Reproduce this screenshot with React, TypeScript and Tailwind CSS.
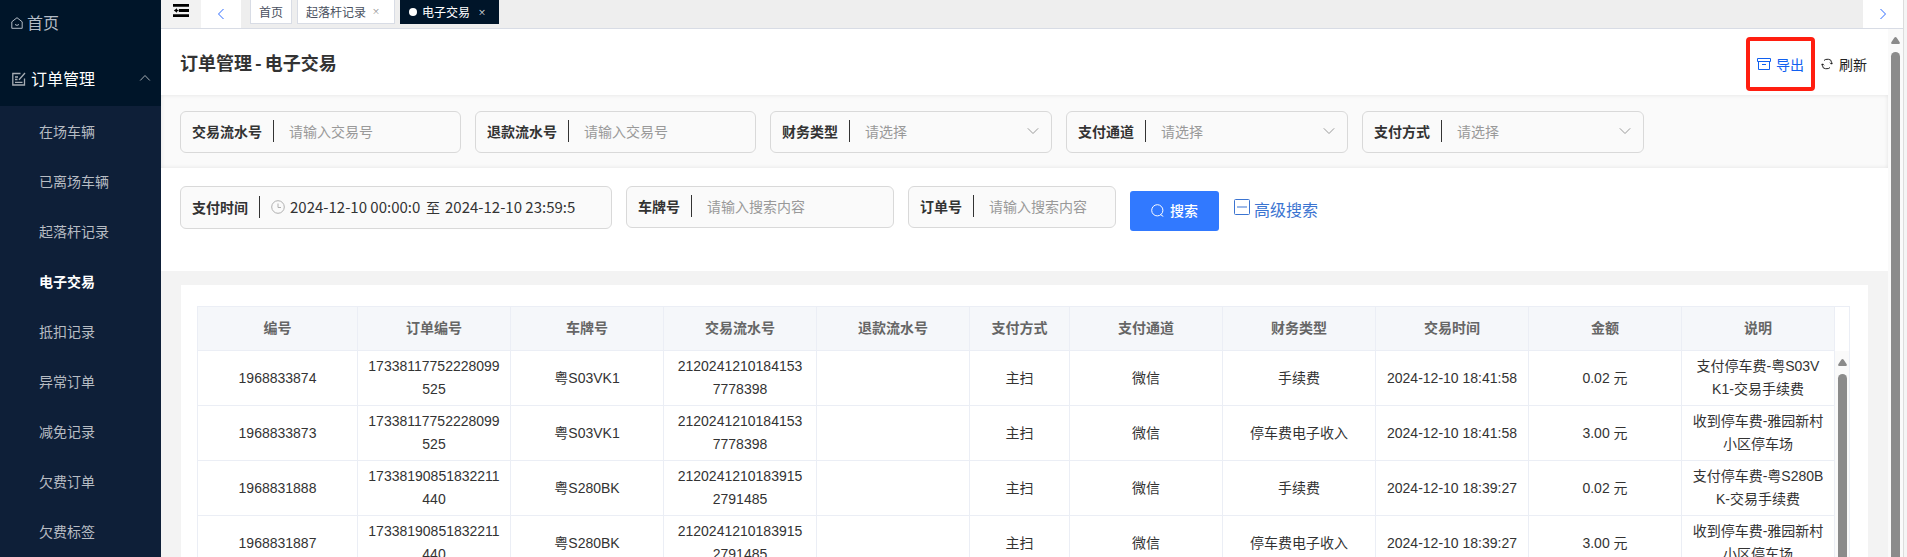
import React from "react";

const menuItems = ["在场车辆", "已离场车辆", "起落杆记录", "电子交易", "抵扣记录", "异常订单", "减免记录", "欠费订单", "欠费标签"];

const columns = ["编号", "订单编号", "车牌号", "交易流水号", "退款流水号", "支付方式", "支付通道", "财务类型", "交易时间", "金额", "说明"];

const rows = [
  ["1968833874", "17338117752228099525", "粤S03VK1", "21202412101841537778398", "", "主扫", "微信", "手续费", "2024-12-10 18:41:58", "0.02 元", "支付停车费-粤S03VK1-交易手续费"],
  ["1968833873", "17338117752228099525", "粤S03VK1", "21202412101841537778398", "", "主扫", "微信", "停车费电子收入", "2024-12-10 18:41:58", "3.00 元", "收到停车费-雅园新村小区停车场"],
  ["1968831888", "17338190851832211440", "粤S280BK", "21202412101839152791485", "", "主扫", "微信", "手续费", "2024-12-10 18:39:27", "0.02 元", "支付停车费-粤S280BK-交易手续费"],
  ["1968831887", "17338190851832211440", "粤S280BK", "21202412101839152791485", "", "主扫", "微信", "停车费电子收入", "2024-12-10 18:39:27", "3.00 元", "收到停车费-雅园新村小区停车场"],
];

function Chevron({ className, d }: { className: string; d: string }) {
  return (
    <svg className={className} viewBox="0 0 12 12" fill="none" stroke="currentColor" strokeWidth="1">
      <path d={d} />
    </svg>
  );
}

function ScrollBar({ className }: { className: string }) {
  return (
    <div className={"flex shrink-0 flex-col items-center bg-[#fafafa] " + className} aria-hidden="true">
      <svg className="h-[7px] w-[9px] shrink-0" viewBox="0 0 9 7" fill="#8b8b8b">
        <path d="M4.5 0 Q5.2 0 5.7 .8 L8.7 5.2 Q9.2 7 8 7 H1 Q-.2 7 .3 5.2 L3.3 .8 Q3.800 0 4.5 0Z" />
      </svg>
      <div className="mt-2 w-[9px] grow rounded-t-full bg-[#8b8b8b]" />
    </div>
  );
}

function Field({ id, label, className, children }: { id: string; label: string; className: string; children: React.ReactNode }) {
  return (
    <div className={"flex items-center rounded-md border border-[#d9d9d9] bg-[#fafafa] pb-0.5 pl-[11px] " + className}>
      <label htmlFor={id} className="shrink-0 text-sm font-bold text-[#333]">
        {label}
      </label>
      <div className="ml-[11px] h-[22px] w-px shrink-0 bg-[#333]" />
      {children}
    </div>
  );
}

function TextField({ id, label, placeholder, className }: { id: string; label: string; placeholder: string; className: string }) {
  return (
    <Field id={id} label={label} className={"h-[42px] " + className}>
      <input id={id} placeholder={placeholder} className="ml-[15px] w-0 grow bg-transparent text-sm outline-none placeholder:text-[#999]" />
    </Field>
  );
}

function SelectField({ id, label, className }: { id: string; label: string; className: string }) {
  return (
    <Field id={id} label={label} className={"h-[42px] " + className}>
      <select id={id} className="ml-[15px] w-0 grow appearance-none bg-transparent text-sm text-[#999] outline-none">
        <option>请选择</option>
      </select>
      <Chevron className="pointer-events-none mr-3 size-3 text-[#999]" d="M.8 3.300 L6 8.500 L11.200 3.300" />
    </Field>
  );
}

export default function App() {
  return (
    <div className="flex h-screen overflow-hidden bg-[#f5f5f5] font-['Noto_Sans_CJK_SC',sans-serif] text-[#333]">
      <aside className="w-[161px] shrink-0 overflow-hidden bg-[#0e1f38]">
        <nav>
          <div className="bg-[#001529]">
            <a href="#home" className="flex h-[50px] items-center pb-[6px] pl-[11px] text-base text-[#b3bcc6]">
              <svg className="mt-0.5 mr-1 size-3 shrink-0" viewBox="0 0 12 12" fill="none" stroke="currentColor">
                <path d="M.8 4.800 L6 .7 L11.200 4.800 V11.300 H.8Z M4 7.500 Q6 9.300 8 7.500" />
              </svg>
              首页
            </a>
            <button type="button" className="flex h-14 w-full items-center pl-3 text-base text-white">
              <svg className="mt-0.5 mr-[5px] size-[14px] shrink-0" viewBox="0 0 14 14" fill="none" stroke="#a6adb4" strokeWidth="1.3">
                <path d="M8.500 1.500 H.8 V13 H12.500 V6.500 M3 5 H6 M3 7.500 H5.500 M3 10.300 H10.500 M13 1 L7 7.800" />
              </svg>
              订单管理
              <Chevron className="mr-2.5 ml-auto size-3 text-[#a6adb4]" d="M1.200 8.500 L6 3.500 L10.800 8.500" />
            </button>
          </div>
          {menuItems.map((item) => (
            <a
              key={item}
              href="#menu"
              className={"flex h-[50px] items-center pl-[39px] text-sm " + (item === "电子交易" ? "font-bold text-white" : "text-[#b7bcc3]")}
            >
              {item}
            </a>
          ))}
        </nav>
      </aside>

      <div className="mr-[3px] flex min-w-0 grow flex-col border-r border-[#dcdcdc]">
        <header className="flex h-[29px] shrink-0 border-b border-[#d8dce5] bg-[#eee]">
          <button type="button" aria-label="收起菜单" className="flex w-10 shrink-0 items-start bg-[#f2f2f2] pt-1 pl-3">
            <svg className="h-[13px] w-4" viewBox="0 0 16 13" fill="#000">
              <path d="M0 0H16V2.800H0Z M6 5.100H16V7.900H6Z M0 10.200H16V13H0Z M.8 6.500 L4 4.200 V5.700 H5.500 V7.300 H4 V8.800Z" />
            </svg>
          </button>
          <button type="button" aria-label="上一个" className="flex w-10 shrink-0 items-center justify-center bg-white text-[#2d6bff]">
            <Chevron className="size-3" d="M8.500 1 L3.500 6 L8.500 11" />
          </button>
          <div className="ml-[9px] flex h-6 grow items-stretch gap-[5px] text-xs">
            <a href="#home" className="flex items-center border border-t-0 border-[#d8dce5] bg-white px-2 text-[#495060]">首页</a>
            <a href="#gate" className="flex items-center border border-t-0 border-[#d8dce5] bg-white px-2 text-[#495060]">
              起落杆记录
              <span className="w-5 text-center text-[8px] text-[#888]">×</span>
            </a>
            <a href="#trade" className="flex items-center bg-[#001529] px-[9px] text-white">
              <span className="mr-[5px] size-2 rounded-full bg-white" />
              电子交易
              <span className="w-5 pl-1 text-center text-[8px]">×</span>
            </a>
          </div>
          <button type="button" aria-label="下一个" className="flex w-10 shrink-0 items-center justify-center bg-white text-[#2d6bff]">
            <Chevron className="size-3" d="M3.500 1 L8.500 6 L3.500 11" />
          </button>
        </header>

        <div className="flex min-h-0 grow">
          <main className="flex min-w-0 grow flex-col overflow-hidden bg-[#f3f3f3]">
            <div className="flex h-[66px] shrink-0 items-center bg-white pt-1 pr-[21px] pl-[19px]">
              <h1 className="grow pb-[5px] text-lg font-bold">
                订单管理<span className="mx-[3px]">-</span>电子交易
              </h1>
              <button type="button" className="mr-1.5 flex h-[54px] items-center gap-[5px] rounded border-4 border-[#ff1e10] px-[7px] text-sm text-[#1060f0]">
                <svg className="size-[14px]" viewBox="0 0 14 14" fill="none" stroke="currentColor">
                  <path d="M.5 1.500 H13.500 V4.500 H.5Z M1.500 4.500 V12.500 H12.500 V4.500 M5 7.500 H9" />
                </svg>
                导出
              </button>
              <button type="button" className="flex items-center gap-1.5 text-sm text-[#222]">
                <svg className="size-3" viewBox="0 0 12 12" fill="none" stroke="currentColor">
                  <path d="M3 2.500 Q4 1.300 6 1.300 H7.500 Q10.500 1.300 10.500 4.500 V6 M9 9.500 Q8 10.700 6 10.700 H4.500 Q1.500 10.700 1.500 7.500 V6 M.3 7.300 L1.500 5.800 L3 7.300 M9 4.700 L10.500 6.200 L11.700 4.700" />
                </svg>
                刷新
              </button>
            </div>

            <form>
              <div className="flex h-[73px] gap-[14px] bg-[#fafafa] px-[19px] pt-4 shadow-[inset_0_0_4px_rgba(0,0,0,0.1)]">
                <TextField id="tradeNo" label="交易流水号" placeholder="请输入交易号" className="w-[281px]" />
                <TextField id="refundNo" label="退款流水号" placeholder="请输入交易号" className="w-[281px]" />
                <SelectField id="financeType" label="财务类型" className="w-[282px]" />
                <SelectField id="channel" label="支付通道" className="w-[282px]" />
                <SelectField id="method" label="支付方式" className="w-[282px]" />
              </div>
              <div className="flex h-[103px] items-start gap-[14px] bg-white px-[19px] pt-[18px]">
                <Field id="payTime" label="支付时间" className="h-[43px] w-[432px]">
                  <svg className="ml-[11px] size-[14px] shrink-0" viewBox="0 0 14 14" fill="none" stroke="#b0b0b0">
                    <path d="M7 .7 A6.300 6.300 0 1 1 7 13.300 A6.300 6.300 0 0 1 7 .7 M7 3.500 V7.500 H10" />
                  </svg>
                  <input id="payTime" defaultValue="2024-12-10 00:00:0" className="ml-[5px] w-[136px] bg-transparent pt-0.5 text-[15px] outline-none" />
                  <span className="text-sm">至</span>
                  <input aria-label="结束时间" defaultValue="2024-12-10 23:59:5" className="ml-[5px] w-[136px] bg-transparent pt-0.5 text-[15px] outline-none" />
                </Field>
                <TextField id="plate" label="车牌号" placeholder="请输入搜索内容" className="w-[268px]" />
                <TextField id="orderNo" label="订单号" placeholder="请输入搜索内容" className="w-[208px]" />
                <button type="submit" className="mt-[5px] flex h-10 w-[89px] items-center justify-center gap-1.5 rounded-[3px] bg-[#3179ff] pb-0.5 text-sm font-medium text-white">
                  <svg className="size-[13px]" viewBox="0 0 13 13" fill="none" stroke="currentColor">
                    <path d="M6.300 .7 A5.600 5.600 0 1 1 6.300 11.900 A5.600 5.600 0 0 1 6.300 .7 M9.500 10.500 L12.300 12.500" />
                  </svg>
                  搜索
                </button>
                <button type="button" className="mt-[3px] ml-px flex h-10 items-center gap-1 text-base text-[#3b74d1]">
                  <svg className="mb-1 size-4" viewBox="0 0 16 16" fill="none" stroke="currentColor">
                    <rect x=".5" y=".5" width="15" height="15" rx="1" />
                    <path d="M3 8 H13" strokeWidth="2" strokeOpacity=".5" />
                  </svg>
                  高级搜索
                </button>
              </div>
            </form>

            <section className="mx-5 mt-[14px] flex grow bg-white pt-[21px] pr-[18px] pl-4">
              <table className="w-0 grow table-fixed border-collapse text-center font-['Liberation_Sans','Noto_Sans_CJK_SC',sans-serif] text-sm leading-[23px]">
                <colgroup>
                  {columns.map((c) => (
                    <col key={c} className={c === "编号" ? "w-[160px]" : c === "支付方式" ? "w-[100px]" : ""} />
                  ))}
                </colgroup>
                <thead>
                  <tr className="h-11 bg-[#f5f7fa] text-[#666]">
                    {columns.map((c) => (
                      <th key={c} className="border border-[#ebeef5] font-bold">{c}</th>
                    ))}
                  </tr>
                </thead>
                <tbody>
                  {rows.map((r) => (
                    <tr key={r[0]} className="h-[55px]">
                      {r.map((v, i) => (
                        <td key={columns[i]} className="border border-[#ebeef5] px-2.5 break-all">{v}</td>
                      ))}
                    </tr>
                  ))}
                </tbody>
              </table>
              <div className="flex w-[15px] shrink-0 flex-col border-t border-r border-[#ebeef5]">
                <div className="h-11 shrink-0" />
                <ScrollBar className="grow pt-2" />
              </div>
            </section>
          </main>
          <ScrollBar className="w-[15px] pt-2" />
        </div>
      </div>
    </div>
  );
}
